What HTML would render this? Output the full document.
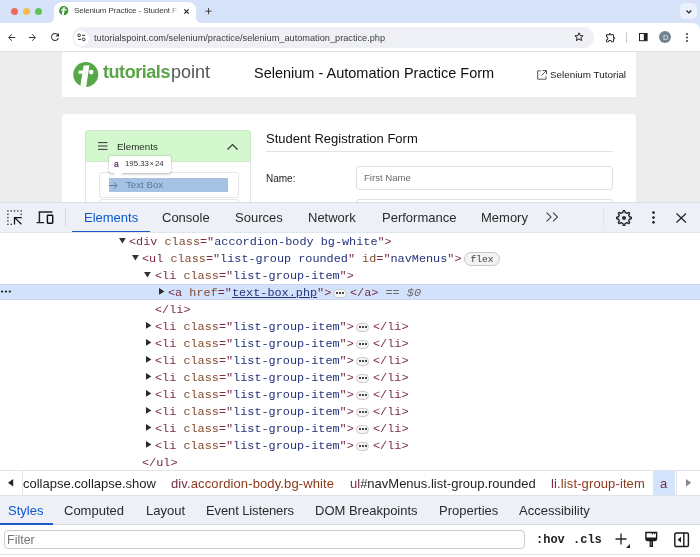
<!DOCTYPE html>
<html><head><meta charset="utf-8">
<style>
*{margin:0;padding:0;box-sizing:border-box}
html,body{width:700px;height:557px;overflow:hidden;background:#fff;font-family:"Liberation Sans",sans-serif}
.a{position:absolute}
.t{position:absolute;white-space:pre;line-height:1;will-change:transform}
.m{font-family:"Liberation Mono",monospace}
svg{position:absolute;overflow:visible}
/* code colors */
.tg{color:#7a2a48}
.an{color:#824b2c}
.av{color:#253279}
.pn{color:#7a2a48}
.ul{text-decoration:underline}
.eq{color:#6a6a6a}
.ui{font-size:13px;color:#2a2a2a}
.bc{font-size:13px}
.bcc{color:#8a3a1c}
.code{font-size:11.83px;line-height:17px;}
.pill{width:13.5px;height:8.6px;border:1px solid #c9c9c9;border-radius:4.5px;background:#f5f5f5}
.pill i{position:absolute;top:2.4px;width:2px;height:2px;border-radius:50%;background:#111}
.pill i:nth-child(1){left:2.4px}.pill i:nth-child(2){left:5.4px}.pill i:nth-child(3){left:8.4px}
.badge{border:1px solid #c8c8c8;border-radius:7px;background:#f3f3f3}
.badge span{position:absolute;left:0;right:0;top:1.2px;text-align:center;font:9.6px/12px "Liberation Mono",monospace;color:#3a3a3a;will-change:transform}
</style></head><body>

<!-- ===== TAB STRIP ===== -->
<div class="a" style="left:0;top:0;width:700px;height:30px;background:#d6e2f8"></div>
<div class="a" style="left:10.5px;top:7.5px;width:7.5px;height:7.5px;border-radius:50%;background:#ee6a5f"></div>
<div class="a" style="left:22.5px;top:7.5px;width:7.5px;height:7.5px;border-radius:50%;background:#f5be4f"></div>
<div class="a" style="left:34.8px;top:7.5px;width:7.5px;height:7.5px;border-radius:50%;background:#61c454"></div>
<!-- active tab -->
<div class="a" style="left:54px;top:2px;width:142px;height:21px;background:#fff;border-radius:8px 8px 0 0"></div>
<svg style="left:48px;top:16.5px" width="6" height="7"><path d="M0 6 Q6 6 6 0 L6 7 L0 7Z" fill="#fff"/></svg>
<svg style="left:196px;top:16.5px" width="6" height="7"><path d="M6 6 Q0 6 0 0 L0 7 L6 7Z" fill="#fff"/></svg>
<!-- favicon -->
<svg style="left:58.8px;top:6.2px" width="9.4" height="9.4" viewBox="0 0 25.5 25"><defs><clipPath id="fc"><circle cx="12.75" cy="12.5" r="12.5"/></clipPath></defs><circle cx="12.75" cy="12.5" r="12.5" fill="#3f9437"/><g clip-path="url(#fc)" fill="#fff"><path d="M10.6 3.6L16.4 3.3L13 26L7 26Z"/><path d="M5.8 8.4H10.4L9.8 11.7H5.3Z"/><circle cx="18.2" cy="10.1" r="2.3"/></g></svg>
<div class="t" style="left:73.8px;top:7.25px;font-size:8px;letter-spacing:-0.12px;color:#3b3b3b">Selenium Practice - Student F</div>
<div class="a" style="left:170.5px;top:3px;width:12px;height:16px;background:linear-gradient(90deg,rgba(255,255,255,0.2),#fff 80%)"></div>
<svg style="left:184px;top:8.5px" width="5" height="5"><path d="M0.3 0.3L4.7 4.7M4.7 0.3L0.3 4.7" stroke="#222" stroke-width="1.2"/></svg>
<svg style="left:205px;top:8px" width="7" height="7"><path d="M3.5 0.2V6.2M0.5 3.2H6.5" stroke="#3a3a3a" stroke-width="0.95"/></svg>
<div class="a" style="left:680px;top:2.7px;width:16.8px;height:16.8px;background:#eaf0fc;border-radius:5px"></div>
<svg style="left:685.6px;top:9.6px" width="6" height="4"><path d="M0.5 0.5L2.9 2.9L5.3 0.5" stroke="#222" stroke-width="1.25" fill="none"/></svg>

<!-- ===== TOOLBAR ===== -->
<div class="a" style="left:0;top:22.5px;width:700px;height:28.5px;background:#fff;border-top-right-radius:7px"></div>
<div class="a" style="left:0;top:51px;width:700px;height:1px;background:#e2e2e2"></div>
<svg style="left:6px;top:31.9px" width="11.04" height="11.04" viewBox="0 0 24 24"><path d="M20 11.1H7.83l5.59-5.59L12.3 4.4l-7.6 7.6 7.6 7.6 1.12-1.12L7.83 12.9H20z" fill="#333"/></svg>
<svg style="left:27.2px;top:31.9px" width="11.04" height="11.04" viewBox="0 0 24 24"><path d="M11.7 4.4l-1.12 1.12L16.17 11.1H4v1.8h12.17l-5.58 5.58L11.7 19.6l7.6-7.6z" fill="#333"/></svg>
<svg style="left:49px;top:31.2px" width="12" height="12" viewBox="0 0 24 24"><path d="M17.65 6.35A7.958 7.958 0 0 0 12 4c-4.42 0-7.99 3.58-7.99 8s3.57 8 7.99 8c3.73 0 6.84-2.550 7.73-6h-2.08A5.99 5.99 0 0 1 12 18c-3.31 0-6-2.69-6-6s2.69-6 6-6c1.66 0 3.14.69 4.22 1.78L13 11h7V4l-2.350 2.35z" fill="#333"/></svg>
<div class="a" style="left:71.5px;top:27px;width:522.2px;height:20.5px;background:#eef0f5;border-radius:10.5px"></div>
<div class="a" style="left:74px;top:30.5px;width:15px;height:15px;background:#fff;border-radius:50%"></div>
<svg style="left:77px;top:33px" width="10" height="9" viewBox="0 0 10 9"><circle cx="2.1" cy="2.3" r="1.35" stroke="#333" stroke-width="1" fill="none"/><path d="M5 2.3H8.1M1 6.4H4" stroke="#333" stroke-width="1"/><circle cx="6.7" cy="6.4" r="1.35" stroke="#333" stroke-width="1" fill="none"/></svg>
<div class="t" style="left:93.8px;top:33.7px;font-size:9.2px;color:#3c3c3c">tutorialspoint.com/selenium/practice/selenium_automation_practice.php</div>
<svg style="left:573.8px;top:31.8px" width="10" height="10" viewBox="0 0 10 10"><path d="M5 0.8L6.2 3.6L9.1 3.8L6.9 5.7L7.6 8.6L5 7L2.4 8.6L3.1 5.7L0.9 3.8L3.8 3.6Z" stroke="#222" stroke-width="1" fill="none" stroke-linejoin="round"/></svg>
<svg style="left:605px;top:31.8px" width="11.3" height="11.3" viewBox="0 0 24 24"><path fill="#1f1f1f" d="M10.5 4.5c.28 0 .5.22.5.5v2h6v6h2c.28 0 .5.22.5.5s-.22.5-.5.5h-2v6h-2.12c-.68-1.750-2.39-3-4.38-3s-3.7 1.25-4.38 3H4v-2.12c1.75-.68 3-2.39 3-4.38 0-1.99-1.24-3.7-2.99-4.38L4 7h6V5c0-.28.22-.5.5-.5m0-2C9.12 2.5 8 3.62 8 5H4c-1.1 0-1.99.9-1.99 2v3.8h.29c1.49 0 2.7 1.21 2.7 2.7s-1.21 2.7-2.7 2.7H2V20c0 1.1.9 2 2 2h3.8v-.3c0-1.49 1.21-2.7 2.7-2.7s2.7 1.21 2.7 2.7v.3H17c1.1 0 2-.9 2-2v-4c1.38 0 2.5-1.12 2.5-2.5S20.38 11 19 11V7c0-1.1-.9-2-2-2h-4c0-1.38-1.12-2.5-2.5-2.5z"/></svg>
<div class="a" style="left:626px;top:32px;width:1px;height:11px;background:#c8ccd4"></div>
<svg style="left:639px;top:33.2px" width="9" height="9" viewBox="0 0 9 9"><rect x="0.5" y="0.5" width="7.6" height="7.2" stroke="#222" stroke-width="1" fill="none"/><rect x="4.8" y="0.5" width="3.3" height="7.2" fill="#222"/></svg>
<div class="a" style="left:658.9px;top:31px;width:12.2px;height:12.2px;border-radius:50%;background:#718290"></div>
<div class="t" style="left:662.6px;top:33.6px;font-size:7.6px;color:#e4eaf0">D</div>
<svg style="left:686px;top:33px" width="2" height="9"><circle cx="1" cy="1" r="0.9" fill="#222"/><circle cx="1" cy="4.5" r="0.9" fill="#222"/><circle cx="1" cy="8" r="0.9" fill="#222"/></svg>

<!-- ===== PAGE ===== -->
<div class="a" style="left:0;top:52px;width:700px;height:151px;background:#ededed"></div>
<div class="a" style="left:62px;top:52px;width:574px;height:45px;background:#fff"></div>
<svg style="left:72.5px;top:62px" width="25.5" height="25" viewBox="0 0 25.5 25"><defs><clipPath id="lc"><circle cx="12.75" cy="12.5" r="12.5"/></clipPath></defs><circle cx="12.75" cy="12.5" r="12.5" fill="#56a745"/><g clip-path="url(#lc)" fill="#fff"><path d="M10.6 3.6L16.4 3.3L13 26L7 26Z"/><path d="M5.8 8.4H10.4L9.8 11.7H5.3Z"/><circle cx="18.2" cy="10.1" r="2.3"/></g></svg>
<div class="t" style="left:102.5px;top:63.1px;font-size:18px;font-weight:bold;color:#58a548;letter-spacing:-0.45px">tutorials</div>
<div class="t" style="left:170.5px;top:63.1px;font-size:18px;color:#555">point</div>
<div class="t" style="left:253.5px;top:65.5px;font-size:14.5px;color:#111">Selenium - Automation Practice Form</div>
<svg style="left:537px;top:70px" width="10" height="10" viewBox="0 0 10 10"><path d="M3.8 0.9H0.7V9.2H9V6.2" stroke="#555" stroke-width="1" fill="none"/><path d="M5.6 0.5H9.5V4.4M9.3 0.7L4.5 5.5" stroke="#555" stroke-width="1" fill="none"/></svg>
<div class="t" style="left:549.5px;top:70.2px;font-size:9.85px;color:#222">Selenium Tutorial</div>
<div class="a" style="left:62px;top:114px;width:574px;height:100px;background:#fff;border-radius:4px"></div>
<!-- accordion -->
<div class="a" style="left:85px;top:130px;width:166px;height:90px;border:1px solid #e3e6e3;border-radius:3px 3px 0 0;background:#fff"></div>
<div class="a" style="left:85px;top:130px;width:166px;height:31.5px;background:#d4f8ce;border:1px solid #cfeac9;border-radius:3px 3px 0 0"></div>
<svg style="left:98px;top:142px" width="10" height="8"><path d="M0 0.6H9.5M0 4H9.5M0 7.4H9.5" stroke="#333" stroke-width="1"/></svg>
<div class="t" style="left:117px;top:142.3px;font-size:9.8px;color:#1f2a1f">Elements</div>
<svg style="left:227px;top:144px" width="11" height="6"><path d="M0.5 5.5L5.5 0.6L10.5 5.5" stroke="#333" stroke-width="1.2" fill="none"/></svg>
<div class="a" style="left:98.5px;top:172px;width:140px;height:25.5px;border:1px solid #e6e6e6;border-radius:3px;background:#fff"></div>
<div class="a" style="left:98.5px;top:199px;width:140px;height:10px;border:1px solid #e6e6e6;border-radius:3px;background:#fff"></div>
<div class="a" style="left:108.5px;top:178px;width:119.5px;height:14px;background:#a5c1e3"></div>
<svg style="left:109px;top:181.5px" width="9" height="7"><path d="M0 3.5H8M5 0.5L8 3.5L5 6.5" stroke="#587aa2" stroke-width="1" fill="none"/></svg>
<div class="t" style="left:126px;top:180px;font-size:9.7px;color:#587aa2">Text Box</div>
<!-- tooltip -->
<div class="a" style="left:108.5px;top:155.5px;width:62px;height:17.5px;background:#fff;border-radius:3px;box-shadow:0 0.5px 2.5px rgba(0,0,0,0.3)"></div>
<svg style="left:113px;top:172.5px" width="10" height="5"><path d="M0 0L5 4.6L10 0Z" fill="#fff"/></svg>
<div class="t" style="left:114px;top:160.3px;font-size:8.5px;color:#5e2070;-webkit-text-stroke:0.2px #5e2070">a</div>
<div class="t" style="left:125px;top:160.3px;font-size:7.8px;color:#333">195.33<span style="font-size:7px;margin:0 1px">×</span>24</div>

<div class="t" style="left:266px;top:132px;font-size:13px;color:#111">Student Registration Form</div>
<div class="a" style="left:266px;top:151px;width:347px;height:1px;background:#e3e3e3"></div>
<div class="t" style="left:266px;top:173.6px;font-size:10px;color:#222">Name:</div>
<div class="a" style="left:356px;top:166px;width:257px;height:24px;border:1px solid #e0e0e0;border-radius:3px;background:#fff"></div>
<div class="t" style="left:363.8px;top:172.6px;font-size:9.6px;color:#6c6c6c">First Name</div>
<div class="a" style="left:356px;top:199px;width:257px;height:20px;border:1px solid #e0e0e0;border-radius:3px;background:#fff"></div>

<!-- ===== DEVTOOLS ===== -->
<div id="dt" class="a" style="left:0;top:202px;width:700px;height:355px;background:#fff"></div>
<!--CODE-->
<div class="a" style="left:0;top:283.5px;width:700px;height:16.7px;background:#d3e2fb;border-top:0.6px solid #cbd8f0;border-bottom:0.6px solid #cbd8f0"></div>
<svg style="left:0;top:290px" width="12" height="3"><circle cx="2" cy="1.6" r="1.15" fill="#222"/><circle cx="5.9" cy="1.6" r="1.15" fill="#222"/><circle cx="9.8" cy="1.6" r="1.15" fill="#222"/></svg>
<svg style="left:119px;top:238.00px" width="7" height="6"><path d="M0 0H6.8L3.4 5.6Z" fill="#333"/></svg>
<div class="t m code" style="left:129px;top:234.00px"><span class="tg">&lt;div</span> <span class="an">class</span><span class="pn">="</span><span class="av">accordion-body bg-white</span><span class="pn">"</span><span class="tg">&gt;</span></div>
<svg style="left:131.6px;top:255.00px" width="7" height="6"><path d="M0 0H6.8L3.4 5.6Z" fill="#333"/></svg>
<div class="t m code" style="left:142px;top:251.00px"><span class="tg">&lt;ul</span> <span class="an">class</span><span class="pn">="</span><span class="av">list-group rounded</span><span class="pn">"</span> <span class="an">id</span><span class="pn">="</span><span class="av">navMenus</span><span class="pn">"</span><span class="tg">&gt;</span></div>
<div class="a badge" style="left:464.3px;top:251.6px;width:36px;height:14px"><span>flex</span></div>
<svg style="left:144.4px;top:272.00px" width="7" height="6"><path d="M0 0H6.8L3.4 5.6Z" fill="#333"/></svg>
<div class="t m code" style="left:154.8px;top:268.00px"><span class="tg">&lt;li</span> <span class="an">class</span><span class="pn">="</span><span class="av">list-group-item</span><span class="pn">"</span><span class="tg">&gt;</span></div>
<svg style="left:158.6px;top:287.60px" width="6" height="8"><path d="M0 0V6.8L5.4 3.4Z" fill="#2a2a2a"/></svg>
<div class="t m code" style="left:167.6px;top:285.00px"><span class="tg">&lt;a</span> <span class="an">href</span><span class="pn">="</span><span class="av ul">text-box.php</span><span class="pn">"</span><span class="tg">&gt;</span></div>
<div class="a pill" style="left:333px;top:289.00px"><i></i><i></i><i></i></div>
<div class="t m code" style="left:350px;top:285.00px"><span class="tg">&lt;/a&gt;</span> <span class="eq">==</span> <span class="eq" style="font-style:italic">$0</span></div>
<div class="t m code" style="left:154.8px;top:302.00px"><span class="tg">&lt;/li&gt;</span></div>
<svg style="left:145.6px;top:321.60px" width="6" height="8"><path d="M0 0V6.8L5.4 3.4Z" fill="#2a2a2a"/></svg>
<div class="t m code" style="left:154.8px;top:319.00px"><span class="tg">&lt;li</span> <span class="an">class</span><span class="pn">="</span><span class="av">list-group-item</span><span class="pn">"</span><span class="tg">&gt;</span></div>
<div class="a pill" style="left:355.6px;top:323.00px"><i></i><i></i><i></i></div>
<div class="t m code" style="left:373px;top:319.00px"><span class="tg">&lt;/li&gt;</span></div>
<svg style="left:145.6px;top:338.60px" width="6" height="8"><path d="M0 0V6.8L5.4 3.4Z" fill="#2a2a2a"/></svg>
<div class="t m code" style="left:154.8px;top:336.00px"><span class="tg">&lt;li</span> <span class="an">class</span><span class="pn">="</span><span class="av">list-group-item</span><span class="pn">"</span><span class="tg">&gt;</span></div>
<div class="a pill" style="left:355.6px;top:340.00px"><i></i><i></i><i></i></div>
<div class="t m code" style="left:373px;top:336.00px"><span class="tg">&lt;/li&gt;</span></div>
<svg style="left:145.6px;top:355.60px" width="6" height="8"><path d="M0 0V6.8L5.4 3.4Z" fill="#2a2a2a"/></svg>
<div class="t m code" style="left:154.8px;top:353.00px"><span class="tg">&lt;li</span> <span class="an">class</span><span class="pn">="</span><span class="av">list-group-item</span><span class="pn">"</span><span class="tg">&gt;</span></div>
<div class="a pill" style="left:355.6px;top:357.00px"><i></i><i></i><i></i></div>
<div class="t m code" style="left:373px;top:353.00px"><span class="tg">&lt;/li&gt;</span></div>
<svg style="left:145.6px;top:372.60px" width="6" height="8"><path d="M0 0V6.8L5.4 3.4Z" fill="#2a2a2a"/></svg>
<div class="t m code" style="left:154.8px;top:370.00px"><span class="tg">&lt;li</span> <span class="an">class</span><span class="pn">="</span><span class="av">list-group-item</span><span class="pn">"</span><span class="tg">&gt;</span></div>
<div class="a pill" style="left:355.6px;top:374.00px"><i></i><i></i><i></i></div>
<div class="t m code" style="left:373px;top:370.00px"><span class="tg">&lt;/li&gt;</span></div>
<svg style="left:145.6px;top:389.60px" width="6" height="8"><path d="M0 0V6.8L5.4 3.4Z" fill="#2a2a2a"/></svg>
<div class="t m code" style="left:154.8px;top:387.00px"><span class="tg">&lt;li</span> <span class="an">class</span><span class="pn">="</span><span class="av">list-group-item</span><span class="pn">"</span><span class="tg">&gt;</span></div>
<div class="a pill" style="left:355.6px;top:391.00px"><i></i><i></i><i></i></div>
<div class="t m code" style="left:373px;top:387.00px"><span class="tg">&lt;/li&gt;</span></div>
<svg style="left:145.6px;top:406.60px" width="6" height="8"><path d="M0 0V6.8L5.4 3.4Z" fill="#2a2a2a"/></svg>
<div class="t m code" style="left:154.8px;top:404.00px"><span class="tg">&lt;li</span> <span class="an">class</span><span class="pn">="</span><span class="av">list-group-item</span><span class="pn">"</span><span class="tg">&gt;</span></div>
<div class="a pill" style="left:355.6px;top:408.00px"><i></i><i></i><i></i></div>
<div class="t m code" style="left:373px;top:404.00px"><span class="tg">&lt;/li&gt;</span></div>
<svg style="left:145.6px;top:423.60px" width="6" height="8"><path d="M0 0V6.8L5.4 3.4Z" fill="#2a2a2a"/></svg>
<div class="t m code" style="left:154.8px;top:421.00px"><span class="tg">&lt;li</span> <span class="an">class</span><span class="pn">="</span><span class="av">list-group-item</span><span class="pn">"</span><span class="tg">&gt;</span></div>
<div class="a pill" style="left:355.6px;top:425.00px"><i></i><i></i><i></i></div>
<div class="t m code" style="left:373px;top:421.00px"><span class="tg">&lt;/li&gt;</span></div>
<svg style="left:145.6px;top:440.60px" width="6" height="8"><path d="M0 0V6.8L5.4 3.4Z" fill="#2a2a2a"/></svg>
<div class="t m code" style="left:154.8px;top:438.00px"><span class="tg">&lt;li</span> <span class="an">class</span><span class="pn">="</span><span class="av">list-group-item</span><span class="pn">"</span><span class="tg">&gt;</span></div>
<div class="a pill" style="left:355.6px;top:442.00px"><i></i><i></i><i></i></div>
<div class="t m code" style="left:373px;top:438.00px"><span class="tg">&lt;/li&gt;</span></div>
<div class="t m code" style="left:142px;top:455.00px"><span class="tg">&lt;/ul&gt;</span></div>
<!--/CODE-->
<!-- devtools toolbar -->
<div class="a" style="left:0;top:202px;width:700px;height:30.8px;background:#edf0f7;border-top:1px solid #d9dee8;border-bottom:1px solid #e1e5ee"></div>
<svg style="left:0;top:200px" width="30" height="30"><rect x="7.25" y="10.25" width="1.3" height="1.3" fill="#222"/><rect x="10.65" y="10.25" width="1.3" height="1.3" fill="#222"/><rect x="13.85" y="10.25" width="1.3" height="1.3" fill="#222"/><rect x="17.15" y="10.25" width="1.3" height="1.3" fill="#222"/><rect x="20.55" y="10.25" width="1.3" height="1.3" fill="#222"/><rect x="20.55" y="13.65" width="1.3" height="1.3" fill="#222"/><rect x="7.25" y="13.65" width="1.3" height="1.3" fill="#222"/><rect x="7.25" y="16.95" width="1.3" height="1.3" fill="#222"/><rect x="7.25" y="20.25" width="1.3" height="1.3" fill="#222"/><rect x="7.25" y="23.65" width="1.3" height="1.3" fill="#222"/><rect x="10.65" y="23.65" width="1.3" height="1.3" fill="#222"/><path d="M14.5 24.4V17.5H21.8M14.6 17.6L21.4 24.3" stroke="#111" stroke-width="1.25" fill="none"/></svg>
<svg style="left:36px;top:211px" width="18" height="13" viewBox="0 0 18 13"><path d="M3.4 11.8V0.9H16.4M0.6 11.6H8" stroke="#222" stroke-width="1.45" fill="none"/><rect x="11.4" y="4.2" width="5.3" height="8" rx="0.6" stroke="#111" stroke-width="1.45" fill="none"/></svg>
<div class="a" style="left:65px;top:208px;width:1.2px;height:18px;background:#d3d9e4"></div>
<div class="t ui" style="left:83.5px;top:210.5px;color:#0b57d0">Elements</div>
<div class="a" style="left:72px;top:230.8px;width:78px;height:1.6px;background:#1f5bc6"></div>
<div class="t ui" style="left:162.4px;top:210.5px">Console</div>
<div class="t ui" style="left:235px;top:210.5px">Sources</div>
<div class="t ui" style="left:307.8px;top:210.5px">Network</div>
<div class="t ui" style="left:382.4px;top:210.5px">Performance</div>
<div class="t ui" style="left:480.8px;top:210.5px">Memory</div>
<svg style="left:546px;top:212px" width="14" height="10" viewBox="0 0 14 10"><path d="M0.6 0.6L5 5L0.6 9.4M7 0.6L11.4 5L7 9.4" stroke="#333" stroke-width="1.05" fill="none"/></svg>
<div class="a" style="left:602.8px;top:208.5px;width:1px;height:17px;background:#dce1ea"></div>
<svg style="left:613.9px;top:207.9px" width="20" height="20" viewBox="0 0 20 20"><path d="M17.26 9.26L17.27 9.37L17.28 9.48L17.29 9.60L17.29 9.71L17.30 9.83L17.30 9.94L17.30 10.06L17.30 10.17L17.29 10.29L17.29 10.40L17.28 10.52L17.27 10.63L17.26 10.74L17.16 10.85L16.90 10.93L16.53 10.98L16.12 11.02L15.74 11.05L15.48 11.09L15.38 11.16L15.36 11.24L15.34 11.33L15.32 11.41L15.29 11.49L15.27 11.58L15.24 11.66L15.22 11.74L15.19 11.82L15.16 11.90L15.13 11.98L15.10 12.06L15.06 12.14L15.03 12.22L14.99 12.30L14.96 12.38L14.92 12.46L14.88 12.54L14.84 12.61L14.80 12.69L14.76 12.76L14.71 12.84L14.67 12.91L14.62 12.98L14.65 13.11L14.80 13.32L15.04 13.60L15.31 13.92L15.53 14.22L15.66 14.46L15.66 14.61L15.59 14.70L15.51 14.78L15.44 14.87L15.36 14.96L15.28 15.04L15.20 15.12L15.12 15.20L15.04 15.28L14.96 15.36L14.87 15.44L14.78 15.51L14.70 15.59L14.61 15.66L14.46 15.66L14.22 15.53L13.92 15.31L13.60 15.04L13.32 14.80L13.11 14.65L12.98 14.62L12.91 14.67L12.84 14.71L12.76 14.76L12.69 14.80L12.61 14.84L12.54 14.88L12.46 14.92L12.38 14.96L12.30 14.99L12.22 15.03L12.14 15.06L12.06 15.10L11.98 15.13L11.90 15.16L11.82 15.19L11.74 15.22L11.66 15.24L11.58 15.27L11.49 15.29L11.41 15.32L11.33 15.34L11.24 15.36L11.16 15.38L11.09 15.48L11.05 15.74L11.02 16.12L10.98 16.53L10.93 16.90L10.85 17.16L10.74 17.26L10.63 17.27L10.52 17.28L10.40 17.29L10.29 17.29L10.17 17.30L10.06 17.30L9.94 17.30L9.83 17.30L9.71 17.29L9.60 17.29L9.48 17.28L9.37 17.27L9.26 17.26L9.15 17.16L9.07 16.90L9.02 16.53L8.98 16.12L8.95 15.74L8.91 15.48L8.84 15.38L8.76 15.36L8.67 15.34L8.59 15.32L8.51 15.29L8.42 15.27L8.34 15.24L8.26 15.22L8.18 15.19L8.10 15.16L8.02 15.13L7.94 15.10L7.86 15.06L7.78 15.03L7.70 14.99L7.62 14.96L7.54 14.92L7.46 14.88L7.39 14.84L7.31 14.80L7.24 14.76L7.16 14.71L7.09 14.67L7.02 14.62L6.89 14.65L6.68 14.80L6.40 15.04L6.08 15.31L5.78 15.53L5.54 15.66L5.39 15.66L5.30 15.59L5.22 15.51L5.13 15.44L5.04 15.36L4.96 15.28L4.88 15.20L4.80 15.12L4.72 15.04L4.64 14.96L4.56 14.87L4.49 14.78L4.41 14.70L4.34 14.61L4.34 14.46L4.47 14.22L4.69 13.92L4.96 13.60L5.20 13.32L5.35 13.11L5.38 12.98L5.33 12.91L5.29 12.84L5.24 12.76L5.20 12.69L5.16 12.61L5.12 12.54L5.08 12.46L5.04 12.38L5.01 12.30L4.97 12.22L4.94 12.14L4.90 12.06L4.87 11.98L4.84 11.90L4.81 11.82L4.78 11.74L4.76 11.66L4.73 11.58L4.71 11.49L4.68 11.41L4.66 11.33L4.64 11.24L4.62 11.16L4.52 11.09L4.26 11.05L3.88 11.02L3.47 10.98L3.10 10.93L2.84 10.85L2.74 10.74L2.73 10.63L2.72 10.52L2.71 10.40L2.71 10.29L2.70 10.17L2.70 10.06L2.70 9.94L2.70 9.83L2.71 9.71L2.71 9.60L2.72 9.48L2.73 9.37L2.74 9.26L2.84 9.15L3.10 9.07L3.47 9.02L3.88 8.98L4.26 8.95L4.52 8.91L4.62 8.84L4.64 8.76L4.66 8.67L4.68 8.59L4.71 8.51L4.73 8.42L4.76 8.34L4.78 8.26L4.81 8.18L4.84 8.10L4.87 8.02L4.90 7.94L4.94 7.86L4.97 7.78L5.01 7.70L5.04 7.62L5.08 7.54L5.12 7.46L5.16 7.39L5.20 7.31L5.24 7.24L5.29 7.16L5.33 7.09L5.38 7.02L5.35 6.89L5.20 6.68L4.96 6.40L4.69 6.08L4.47 5.78L4.34 5.54L4.34 5.39L4.41 5.30L4.49 5.22L4.56 5.13L4.64 5.04L4.72 4.96L4.80 4.88L4.88 4.80L4.96 4.72L5.04 4.64L5.13 4.56L5.22 4.49L5.30 4.41L5.39 4.34L5.54 4.34L5.78 4.47L6.08 4.69L6.40 4.96L6.68 5.20L6.89 5.35L7.02 5.38L7.09 5.33L7.16 5.29L7.24 5.24L7.31 5.20L7.39 5.16L7.46 5.12L7.54 5.08L7.62 5.04L7.70 5.01L7.78 4.97L7.86 4.94L7.94 4.90L8.02 4.87L8.10 4.84L8.18 4.81L8.26 4.78L8.34 4.76L8.42 4.73L8.51 4.71L8.59 4.68L8.67 4.66L8.76 4.64L8.84 4.62L8.91 4.52L8.95 4.26L8.98 3.88L9.02 3.47L9.07 3.10L9.15 2.84L9.26 2.74L9.37 2.73L9.48 2.72L9.60 2.71L9.71 2.71L9.83 2.70L9.94 2.70L10.06 2.70L10.17 2.70L10.29 2.71L10.40 2.71L10.52 2.72L10.63 2.73L10.74 2.74L10.85 2.84L10.93 3.10L10.98 3.47L11.02 3.88L11.05 4.26L11.09 4.52L11.16 4.62L11.24 4.64L11.33 4.66L11.41 4.68L11.49 4.71L11.58 4.73L11.66 4.76L11.74 4.78L11.82 4.81L11.90 4.84L11.98 4.87L12.06 4.90L12.14 4.94L12.22 4.97L12.30 5.01L12.38 5.04L12.46 5.08L12.54 5.12L12.61 5.16L12.69 5.20L12.76 5.24L12.84 5.29L12.91 5.33L12.98 5.38L13.11 5.35L13.32 5.20L13.60 4.96L13.92 4.69L14.22 4.47L14.46 4.34L14.61 4.34L14.70 4.41L14.78 4.49L14.87 4.56L14.96 4.64L15.04 4.72L15.12 4.80L15.20 4.88L15.28 4.96L15.36 5.04L15.44 5.13L15.51 5.22L15.59 5.30L15.66 5.39L15.66 5.54L15.53 5.78L15.31 6.08L15.04 6.40L14.80 6.68L14.65 6.89L14.62 7.02L14.67 7.09L14.71 7.16L14.76 7.24L14.80 7.31L14.84 7.39L14.88 7.46L14.92 7.54L14.96 7.62L14.99 7.70L15.03 7.78L15.06 7.86L15.10 7.94L15.13 8.02L15.16 8.10L15.19 8.18L15.22 8.26L15.24 8.34L15.27 8.42L15.29 8.51L15.32 8.59L15.34 8.67L15.36 8.76L15.38 8.84L15.48 8.91L15.74 8.95L16.12 8.98L16.53 9.02L16.90 9.07L17.16 9.15Z" stroke="#1f1f1f" stroke-width="1.3" fill="none" stroke-linejoin="round"/><circle cx="10" cy="10" r="2.1" fill="#333"/></svg>
<svg style="left:652px;top:211px" width="3" height="13"><circle cx="1.5" cy="1.6" r="1.35" fill="#222"/><circle cx="1.5" cy="6.6" r="1.35" fill="#222"/><circle cx="1.5" cy="11.3" r="1.35" fill="#222"/></svg>
<svg style="left:676px;top:212.5px" width="11" height="10"><path d="M0.5 0.5L10 9.5M10 0.5L0.5 9.5" stroke="#222" stroke-width="1.2"/></svg>

<!-- breadcrumb -->
<div class="a" style="left:0;top:470px;width:700px;height:25px;background:#fff;border-top:1px solid #dfe3ea"></div>
<div class="a" style="left:0;top:470px;width:22.5px;height:25px;border-right:1px solid #e3e3e3;border-top:1px solid #dfe3ea;background:#fff"></div>
<svg style="left:8px;top:479px" width="6" height="8"><path d="M5.2 0V7.4L0 3.7Z" fill="#222"/></svg>
<div class="t bc" style="left:23px;top:476.6px;color:#1f1f1f">collapse.collapse.show</div>
<div class="t bc" style="left:171.4px;top:476.6px;letter-spacing:0.12px"><span class="tg">div</span><span class="bcc">.accordion-body.bg-white</span></div>
<div class="t bc" style="left:350px;top:476.6px"><span class="tg">ul</span><span style="color:#1f1f1f">#navMenus.list-group.rounded</span></div>
<div class="t bc" style="left:551px;top:476.6px;letter-spacing:0.12px"><span class="tg">li</span><span class="bcc">.list-group-item</span></div>
<div class="a" style="left:653px;top:471px;width:21.5px;height:24px;background:#d3e3fd"></div>
<div class="t bc" style="left:659.5px;top:476.6px"><span class="tg">a</span></div>
<div class="a" style="left:676px;top:471px;width:24px;height:24px;border-left:1px solid #e3e3e3;background:#fff"></div>
<svg style="left:686px;top:479px" width="6" height="8"><path d="M0 0V7.4L5.2 3.7Z" fill="#888"/></svg>

<!-- bottom tabs -->
<div class="a" style="left:0;top:495px;width:700px;height:30px;background:#edf0f7;border-top:1px solid #dfe3ea;border-bottom:1px solid #d5dae4"></div>
<div class="t ui" style="left:7.6px;top:503.5px;color:#0b57d0">Styles</div>
<div class="a" style="left:0;top:523px;width:53px;height:1.8px;background:#1f5bc6"></div>
<div class="t ui" style="left:63.6px;top:503.5px">Computed</div>
<div class="t ui" style="left:146.4px;top:503.5px">Layout</div>
<div class="t ui" style="left:206.2px;top:503.5px;letter-spacing:-0.12px">Event Listeners</div>
<div class="t ui" style="left:315px;top:503.5px">DOM Breakpoints</div>
<div class="t ui" style="left:439px;top:503.5px">Properties</div>
<div class="t ui" style="left:519px;top:503.5px">Accessibility</div>

<!-- filter row -->
<div class="a" style="left:0;top:525px;width:700px;height:32px;background:#fff"></div>
<div class="a" style="left:3.5px;top:529.5px;width:521px;height:19.5px;border:1px solid #c9ccd2;border-radius:4px;background:#fff"></div>
<div class="t" style="left:7.4px;top:534px;font-size:12.5px;color:#777">Filter</div>
<div class="t m" style="left:535.5px;top:534px;font-size:12px;font-weight:bold;color:#222">:hov</div>
<div class="t m" style="left:573px;top:534px;font-size:12px;font-weight:bold;color:#222">.cls</div>
<svg style="left:615px;top:533px" width="16" height="16"><path d="M6 0.5V11.5M0.5 6H11.5" stroke="#222" stroke-width="1.3"/><path d="M15 11V15H11Z" fill="#222"/></svg>
<svg style="left:644px;top:531px" width="15" height="17" viewBox="0 0 15 17"><path d="M1.9 1.5H12.6V7.6Q12.6 9.6 10.6 9.6H3.9Q1.9 9.6 1.9 7.6Z" stroke="#1a1a1a" stroke-width="1.4" fill="none"/><path d="M1.9 6.6H12.6V7.8Q12.6 9.6 10.6 9.6H3.9Q1.9 9.6 1.9 7.8Z" fill="#1a1a1a"/><path d="M8.3 1.5V3.6M10.6 1.5V3.1" stroke="#1a1a1a" stroke-width="1"/><rect x="5.6" y="9.4" width="3.4" height="6.6" fill="#1a1a1a"/><rect x="6.6" y="10.6" width="1.4" height="4" fill="#fff" opacity="0.35"/></svg>
<svg style="left:673px;top:531px" width="17" height="17" viewBox="0 0 17 17"><rect x="1.8" y="1.9" width="13.6" height="13.6" rx="1.3" stroke="#1a1a1a" stroke-width="1.45" fill="none"/><path d="M10.8 1.9V15.5" stroke="#1a1a1a" stroke-width="1.4"/><path d="M8 5.8V11.6L4.6 8.7Z" fill="#1a1a1a"/></svg>
<div class="a" style="left:0;top:554px;width:700px;height:3px;background:#fff;border-top:1px solid #e3e3e3"></div>
<!--DTEND-->
</body></html>
